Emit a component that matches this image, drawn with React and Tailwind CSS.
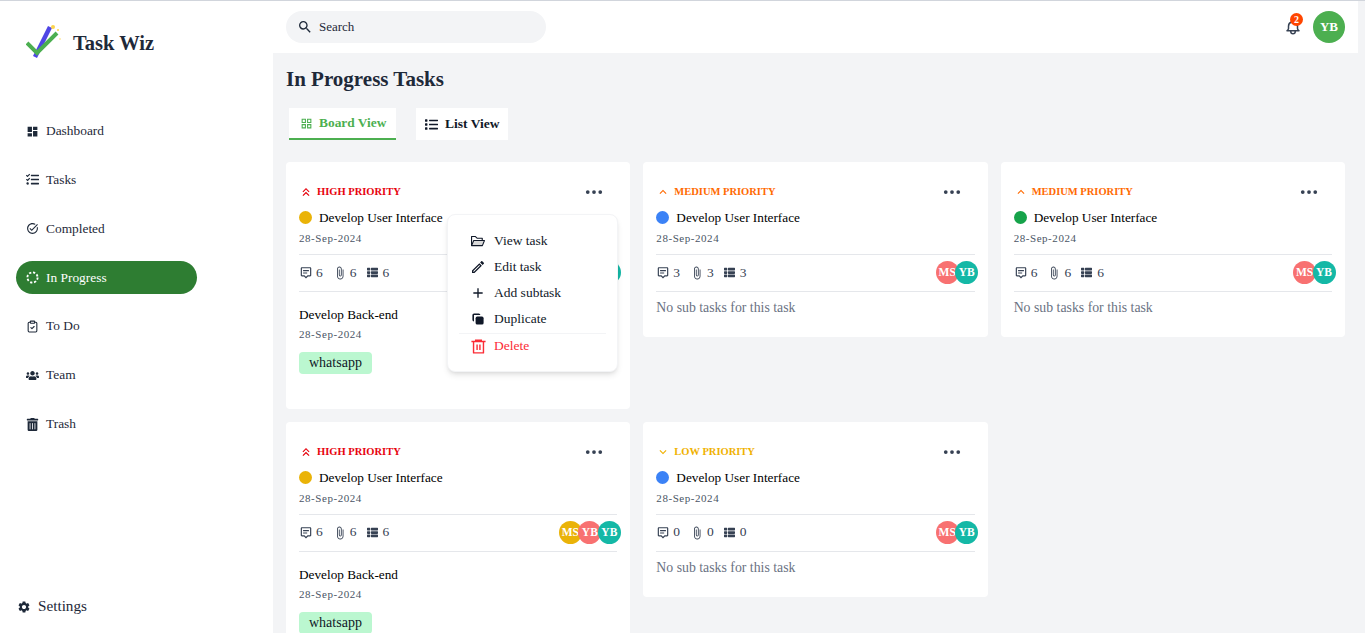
import { MdDashboard, MdTaskAlt, MdSettings, MdOutlineSearch, MdGridView, MdKeyboardDoubleArrowUp, MdKeyboardArrowUp, MdKeyboardArrowDown, MdAttachFile, MdAdd, MdOutlineEdit } from "react-icons/md";
import { FaTasks, FaUsers, FaTrashAlt, FaList, FaThList } from "react-icons/fa";
import { BiMessageAltDetail } from "react-icons/bi";
import { AiTwotoneFolderOpen } from "react-icons/ai";
import { HiDuplicate, HiOutlineBell } from "react-icons/hi";
import { RiDeleteBin6Line } from "react-icons/ri";
import { BsThreeDots } from "react-icons/bs";
import { LuClipboardCheck } from "react-icons/lu";

const DottedCircle = ({ className }) => (
  <svg className={className} viewBox="0 0 14 14" fill="none">
    <circle cx="7" cy="7" r="5.5" stroke="currentColor" strokeWidth="2" strokeDasharray="2.4 1.9" />
  </svg>
);

const navItems = [
  { label: "Dashboard", icon: MdDashboard },
  { label: "Tasks", icon: FaTasks },
  { label: "Completed", icon: MdTaskAlt },
  { label: "In Progress", icon: DottedCircle, active: true },
  { label: "To Do", icon: LuClipboardCheck },
  { label: "Team", icon: FaUsers },
  { label: "Trash", icon: FaTrashAlt },
];

const priorities = {
  high: { label: "HIGH PRIORITY", icon: MdKeyboardDoubleArrowUp, color: "text-red-600" },
  medium: { label: "MEDIUM PRIORITY", icon: MdKeyboardArrowUp, color: "text-orange-500" },
  low: { label: "LOW PRIORITY", icon: MdKeyboardArrowDown, color: "text-yellow-500" },
};

const avatarColors = {
  yellow: "bg-[#eab308]",
  red: "bg-[#f87171]",
  teal: "bg-[#14b8a6]",
};

const menuItems = [
  { label: "View task", icon: AiTwotoneFolderOpen },
  { label: "Edit task", icon: MdOutlineEdit },
  { label: "Add subtask", icon: MdAdd },
  { label: "Duplicate", icon: HiDuplicate },
];

const TaskMenu = () => (
  <div className="absolute left-[161px] top-[52px] z-10 w-[171px] h-[158px] bg-white rounded-lg border border-gray-100 shadow-md pt-[13px] px-[11px]">
    {menuItems.map(({ label, icon: Icon }) => (
      <div key={label} className="flex items-center gap-[8px] h-[26px] pl-[11px] text-[13.5px] text-gray-900">
        <Icon className="w-[16px] h-[16px]" />
        <span>{label}</span>
      </div>
    ))}
    <div className="border-t border-gray-100 mt-[1px] flex items-center gap-[7px] h-[26px] pl-[11px] text-[13.5px] text-red-500">
      <RiDeleteBin6Line className="w-[17px] h-[17px]" />
      <span>Delete</span>
    </div>
  </div>
);

const TaskCard = ({ priority, dot, counts, team, subtask, menu }) => {
  const p = priorities[priority];
  const PIcon = p.icon;
  return (
    <div className={`relative bg-white rounded-[4px] px-[13px] pt-[13px] ${subtask ? "h-[246.85px]" : "h-[175px]"}`}>
      <div className="flex items-center justify-between h-[34px]">
        <div className={`flex items-center gap-[4px] text-[10.5px] font-bold ${p.color}`}>
          <PIcon className="text-[14px]" />
          <span>{p.label}</span>
        </div>
        <BsThreeDots className="text-[20px] text-gray-700 mr-[13px]" />
      </div>
      <div className="flex items-center gap-[7px] h-[20px] mt-[-1px] text-[13.25px] text-black">
        <span className={`w-[13px] h-[13px] rounded-full ${dot}`} />
        <span>Develop User Interface</span>
      </div>
      <div className="text-[11px] text-gray-600 h-[20px] leading-[20px] tracking-[0.55px]">28-Sep-2024</div>
      <div className="border-t border-gray-200 mt-[6px] h-[37px] flex items-center justify-between text-gray-700">
        <div className="flex items-center gap-[10px] text-[13.5px]">
          <span className="flex items-center gap-[3px]"><BiMessageAltDetail className="text-[14px]" />{counts}</span>
          <span className="flex items-center gap-[3px]"><MdAttachFile className="text-[14px]" />{counts}</span>
          <span className="flex items-center gap-[5px]"><FaThList className="text-[11px]" />{counts}</span>
        </div>
        <div className="flex">
          {team.map((m, i) => (
            <div key={i} className={`w-[23px] h-[23px] rounded-full -mr-[3.5px] flex items-center justify-center text-[11.5px] font-bold text-white ${avatarColors[m.c]}`}>{m.t}</div>
          ))}
        </div>
      </div>
      <div className="border-t border-gray-200">
        {subtask ? (
          <div>
            <div className="text-[13.25px] text-black mt-[13px] h-[20px] leading-[20px]">Develop Back-end</div>
            <div className="text-[11px] text-gray-600 h-[19px] leading-[19px] tracking-[0.55px]">28-Sep-2024</div>
            <div className="mt-[8px] w-fit h-[22px] px-[10px] rounded-[4px] bg-[#bbf7d0] text-[14px] leading-[22px] text-gray-900">whatsapp</div>
          </div>
        ) : (
          <div className="text-[13.8px] text-gray-500 mt-[6px] h-[20px] leading-[20px]">No sub tasks for this task</div>
        )}
      </div>
      {menu && <TaskMenu />}
    </div>
  );
};

const trio = [{ t: "MS", c: "yellow" }, { t: "YB", c: "red" }, { t: "YB", c: "teal" }];
const duo = [{ t: "MS", c: "red" }, { t: "YB", c: "teal" }];

export default function App() {
  return (
    <div className="h-screen overflow-hidden flex border-t border-gray-300 bg-[#f3f4f6] font-['Liberation_Serif',serif] text-gray-900">
      <aside className="w-[273px] shrink-0 bg-white flex flex-col">
        <div className="flex items-center gap-[11px] h-[84px] pl-[26px]">
          <svg width="36" height="36" viewBox="0 0 36 36">
            <path d="M9 32 L24 2" stroke="#4f46e5" strokeWidth="4.5" fill="none" />
            <path d="M1 18 L11 28 L31 8" stroke="#4caf50" strokeWidth="4" fill="none" />
            <circle cx="27" cy="2" r="2" fill="#fcd34d" />
            <circle cx="32" cy="5" r="1" fill="#fcd34d" />
            <circle cx="34" cy="14" r="0.7" fill="#fcd34d" />
          </svg>
          <span className="text-[20.5px] font-bold text-gray-800">Task Wiz</span>
        </div>
        <nav className="mt-[29.6px] pl-[16px] flex flex-col gap-[15.83px]">
          {navItems.map(({ label, icon: Icon, active }) => (
            <div key={label} className={`w-[181px] h-[33px] pl-[10px] rounded-full flex items-center gap-[7px] text-[13.4px] ${active ? "bg-[#2e7d32] text-white" : "text-gray-800"}`}>
              <Icon className="w-[13px] h-[13px]" />
              <span>{label}</span>
            </div>
          ))}
        </nav>
        <div className="mt-auto mb-[15px] pl-[17px] flex items-center gap-[7px] text-[15.2px] text-gray-800">
          <MdSettings className="text-[14px]" />
          <span>Settings</span>
        </div>
      </aside>
      <div className="flex-1 flex flex-col min-w-0 pr-[7px]">
        <header className="h-[52px] shrink-0 bg-white flex items-center justify-between px-[13px]">
          <div className="w-[260px] h-[32px] rounded-full bg-[#f3f4f6] flex items-center gap-[6px] pl-[11px] text-[13px] text-gray-800">
            <MdOutlineSearch className="text-[16px]" />
            <span>Search</span>
          </div>
          <div className="flex items-center gap-[11px]">
            <div className="relative">
              <HiOutlineBell className="w-[18px] h-[18px] text-gray-700" />
              <span className="absolute -top-[5px] left-[6px] w-[13px] h-[13px] rounded-full bg-[#ff4500] text-white text-[10px] font-bold flex items-center justify-center">2</span>
            </div>
            <div className="w-[32px] h-[32px] rounded-full bg-[#4caf50] text-white text-[13px] font-bold flex items-center justify-center">YB</div>
          </div>
        </header>
        <main className="px-[13px] flex-1 min-h-0">
          <h1 className="text-[21px] font-bold text-gray-800 h-[27px] leading-[27px] mt-[13px]">In Progress Tasks</h1>
          <div className="flex gap-[20px] mt-[15px] pl-[3px]">
            <div className="w-[107px] h-[32px] bg-white border-b-2 border-[#4caf50] flex items-center gap-[6px] pl-[11px] text-[13.4px] font-bold text-[#4caf50]">
              <MdGridView className="text-[13px]" />
              <span>Board View</span>
            </div>
            <div className="w-[92px] h-[32px] bg-white flex items-center gap-[7px] pl-[9px] text-[13.5px] font-bold text-gray-900">
              <FaList className="text-[13px]" />
              <span>List View</span>
            </div>
          </div>
          <div className="grid grid-cols-3 items-start gap-[13px] mt-[21.7px]">
            <TaskCard priority="high" dot="bg-[#eab308]" counts={6} team={trio} subtask menu />
            <TaskCard priority="medium" dot="bg-[#3b82f6]" counts={3} team={duo} />
            <TaskCard priority="medium" dot="bg-[#16a34a]" counts={6} team={duo} />
            <TaskCard priority="high" dot="bg-[#eab308]" counts={6} team={trio} subtask />
            <TaskCard priority="low" dot="bg-[#3b82f6]" counts={0} team={duo} />
          </div>
        </main>
      </div>
    </div>
  );
}
